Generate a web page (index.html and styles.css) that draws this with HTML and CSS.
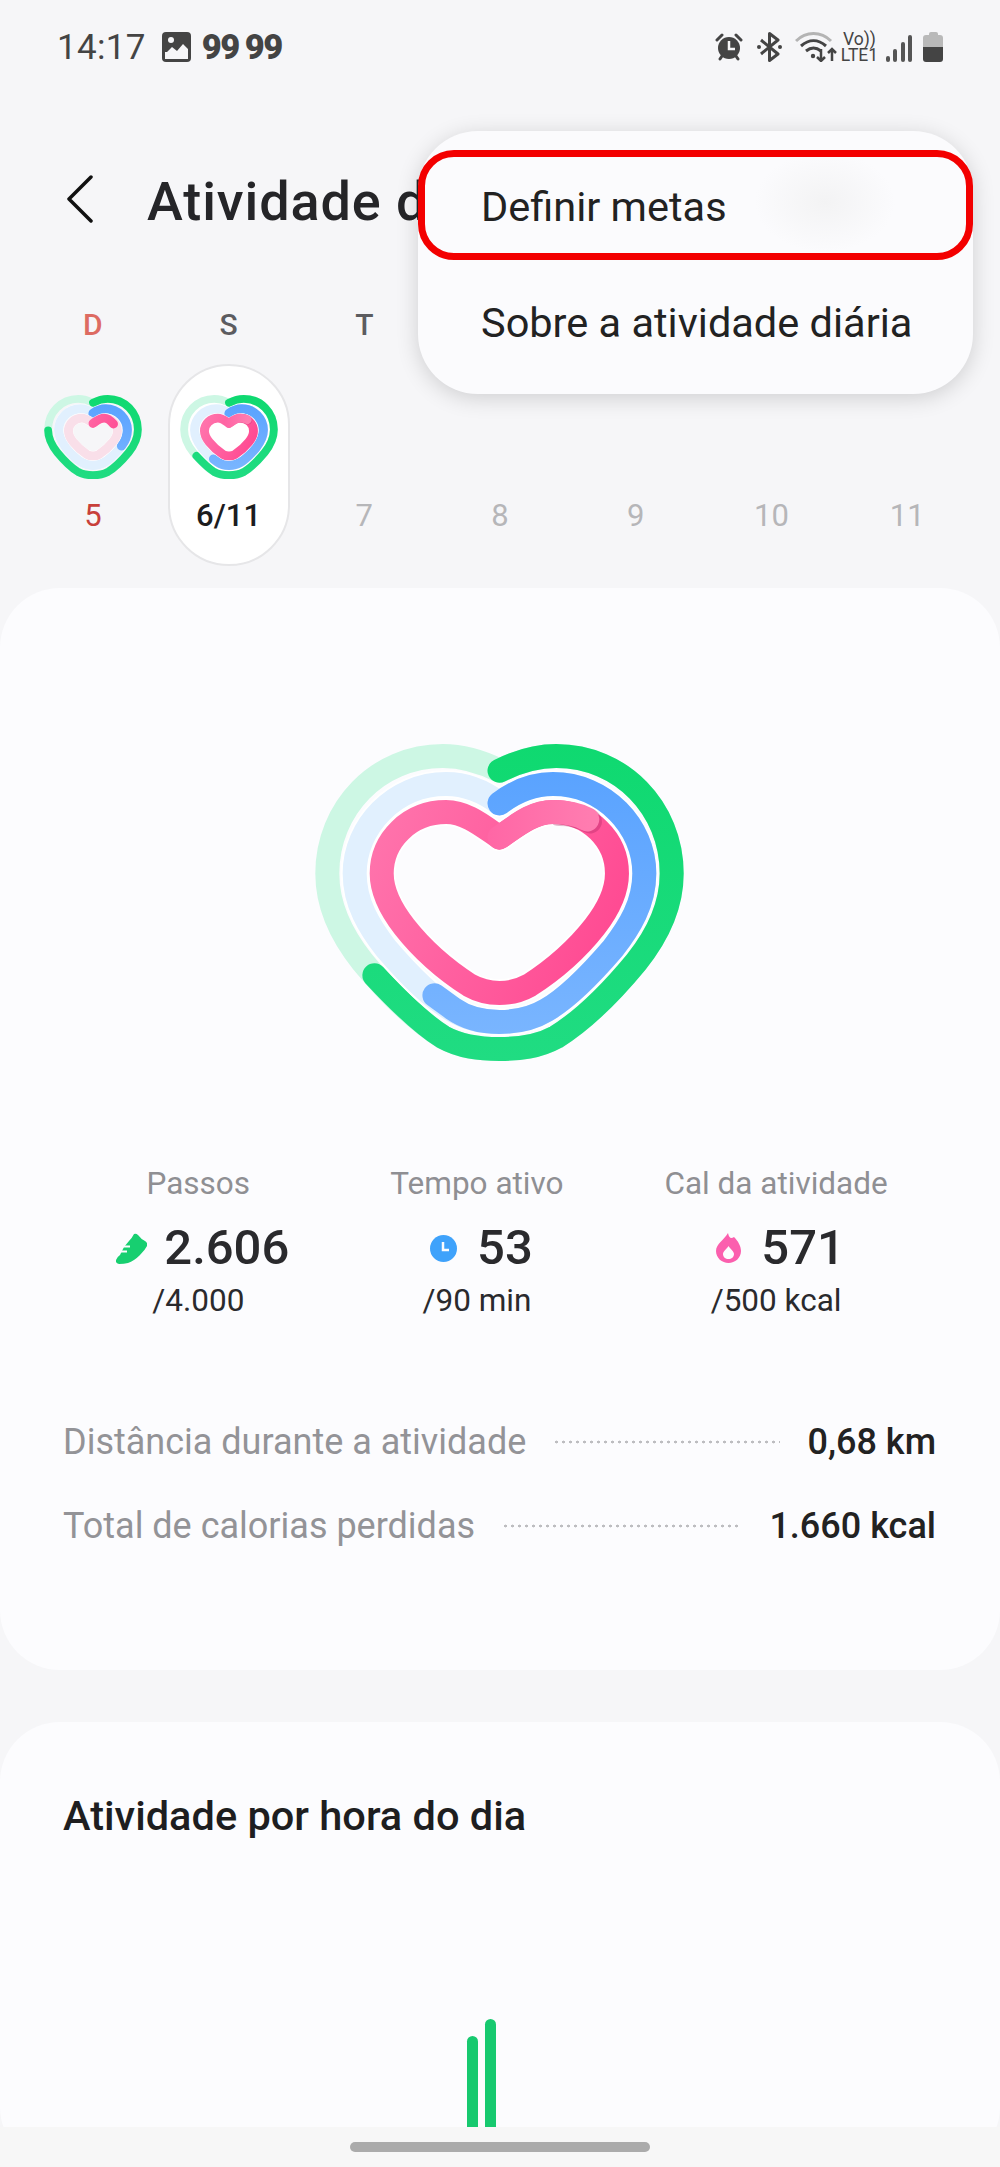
FILE: index.html
```html
<!DOCTYPE html>
<html lang="pt-BR">

<head>
    <meta charset="UTF-8">
    <meta name="viewport" content="width=device-width, initial-scale=1.0">
    <title>Atividade diária</title>
    <link rel="stylesheet" href="styles.css">
</head>

<body>
    <!-- rings shared by the big heart and the week strip -->
    <svg class="defs" width="0" height="0" aria-hidden="true">
        <defs>
            <linearGradient id="gradGreen" gradientUnits="userSpaceOnUse" x1="0" y1="72" x2="0" y2="1022">
                <stop offset="0" stop-color="#0fd970" />
                <stop offset="1" stop-color="#20dc82" />
            </linearGradient>
            <linearGradient id="gradBlue" gradientUnits="userSpaceOnUse" x1="0" y1="156" x2="0" y2="940">
                <stop offset="0" stop-color="#5aa3ff" />
                <stop offset="1" stop-color="#79b5ff" />
            </linearGradient>
            <linearGradient id="gradPink" gradientUnits="userSpaceOnUse" x1="300" y1="300" x2="1000" y2="600">
                <stop offset="0" stop-color="#ff72ab" />
                <stop offset="1" stop-color="#ff4a92" />
            </linearGradient>
            <linearGradient id="gradPinkTop" gradientUnits="userSpaceOnUse" x1="590" y1="0" x2="900" y2="0">
                <stop offset="0" stop-color="#ff66a5" />
                <stop offset="1" stop-color="#ff7cb0" />
            </linearGradient>
            <path id="outerHeart" d="M630 152C570 122 515 108 460 108C265 108 114 265 114 460C114 560 160 650 220 725C290 810 380 900 460 950C515 980 570 986 630 986C690 986 745 980 800 950C880 900 970 810 1040 725C1100 650 1146 560 1146 460C1146 265 995 108 800 108C745 108 690 122 630 152Z" />
            <path id="middleHeart" d="M630 250C580 212 530 192 470 192C315 192 196 320 196 460C196 550 240 620 290 685C350 755 420 830 490 870C535 897 580 905 630 905C680 905 725 897 770 870C840 830 910 755 970 685C1020 620 1064 550 1064 460C1064 320 945 192 790 192C730 192 680 212 630 250Z" />
            <path id="innerHeart" d="M630 352C580 318 530 276 470 276C360 276 277 360 277 460C277 520 310 575 345 620C400 690 470 750 540 795C570 812 600 818 630 818C660 818 690 812 720 795C790 750 860 690 915 620C950 575 982 520 982 460C982 360 900 276 790 276C730 276 680 318 630 352Z" />

            <symbol id="heartFull" class="heart-symbol" viewBox="78 72 1104 950">
                <g class="ring-outer">
                    <use href="#outerHeart" class="ring-green-pale" />
                    <path class="ring-green" d="M630 152C690 122 745 108 800 108C995 108 1146 265 1146 460C1146 560 1100 650 1040 725C970 810 880 900 800 950C745 980 690 986 630 986C570 986 515 980 460 950C400 912 320 835 255 765" />
                </g>
                <g class="ring-middle">
                    <use href="#middleHeart" class="ring-gap" />
                    <use href="#middleHeart" class="ring-blue-pale" />
                    <path class="ring-blue" d="M630 250C680 212 730 192 790 192C945 192 1064 320 1064 460C1064 550 1020 620 970 685C910 755 840 830 770 870C725 897 680 905 630 905C580 905 535 897 490 865L435 825" />
                </g>
                <g class="ring-inner">
                    <use href="#innerHeart" class="ring-gap" />
                    <use href="#innerHeart" class="ring-pink" />
                    <path class="ring-pink-shade" d="M800 276C830 276 865 283 893 298" />
                    <path class="ring-pink-top" d="M630 352C680 318 725 276 790 276C830 276 865 283 893 298" />
                </g>
            </symbol>

            <symbol id="heartPartial" class="heart-symbol" viewBox="78 72 1104 950">
                <g class="ring-outer">
                    <use href="#outerHeart" class="ring-green-pale" />
                    <path class="ring-green" d="M630 152C690 122 745 108 800 108C995 108 1146 265 1146 460C1146 560 1100 650 1040 725C970 810 880 900 800 950C745 980 690 986 630 986C570 986 515 980 460 950C380 900 290 810 220 725C160 650 114 560 114 470" />
                </g>
                <g class="ring-middle">
                    <use href="#middleHeart" class="ring-gap" />
                    <use href="#middleHeart" class="ring-blue-pale" />
                    <path class="ring-blue" d="M630 250C680 212 730 192 790 192C945 192 1064 320 1064 460C1064 550 1030 610 990 660" />
                </g>
                <g class="ring-inner">
                    <use href="#innerHeart" class="ring-gap" />
                    <use href="#innerHeart" class="ring-pink-pale" />
                    <path class="ring-pink" d="M630 352C680 318 725 276 790 276C840 276 890 320 925 360" />
                </g>
            </symbol>
        </defs>
    </svg>

    <div class="status-bar">
        <div class="status-left">
            <span class="clock">14:17</span>
            <svg class="status-image" width="29" height="30" viewBox="0 0 29 30">
                <rect x="0" y="0" width="29" height="30" rx="4" fill="#444" />
                <rect x="3" y="20" width="23" height="7" fill="#f6f6f8" />
                <path d="M3 22L10 15L15 19L21 12L26 17V27H3Z" fill="#f6f6f8" />
                <circle cx="9" cy="8" r="3" fill="#f6f6f8" />
            </svg>
            <span class="badge-count">99</span>
            <span class="badge-count">99</span>
        </div>
        <div class="status-right">
            <svg width="28" height="30" viewBox="0 0 28 30">
                <circle cx="14" cy="16" r="11" fill="#444" />
                <path d="M14 9V17H20" fill="none" stroke="#f6f6f8" stroke-width="2.5" />
                <path d="M2 8L7 3M26 8L21 3M5 27L7 24M23 27L21 24" stroke="#444" stroke-width="3" stroke-linecap="round" />
            </svg>
            <svg class="status-bt" width="25" height="30" viewBox="0 0 25 30">
                <path d="M4 8L21 22L12.500 28.500V1.500L21 8L4 22" fill="none" stroke="#444" stroke-width="3" stroke-linejoin="round" />
                <circle cx="2" cy="15" r="2" fill="#444" />
                <circle cx="23" cy="15" r="2" fill="#444" />
            </svg>
            <svg class="status-wifi" width="43" height="30" viewBox="0 0 43 30">
                <path d="M1 9C11 -1 26 -1 36 9" fill="none" stroke="#b4b4b4" stroke-width="3" />
                <path d="M6 14C14 7 23 7 31 14M11 19C16 15 21 15 26 19" fill="none" stroke="#444" stroke-width="3" />
                <circle cx="18" cy="24" r="2.200" fill="#444" />
                <path d="M26 17V29M22 25L26 29L30 25M37 29V17M33 21L37 17L41 21" fill="none" stroke="#444" stroke-width="2.500" />
            </svg>
            <span class="volte"><span>Vo))</span><span>LTE1</span></span>
            <div class="signal">
                <span class="signal-bar" style="height: 6px"></span>
                <span class="signal-bar" style="height: 13px"></span>
                <span class="signal-bar" style="height: 20px"></span>
                <span class="signal-bar" style="height: 27px"></span>
            </div>
            <div class="battery">
                <span class="battery-cap"></span>
                <span class="battery-body"></span>
            </div>
        </div>
    </div>

    <header class="app-header">
        <svg class="back-icon" width="26" height="48" viewBox="0 0 26 48">
            <path d="M24 2L2 24L24 46" fill="none" stroke="#111" stroke-width="3.500" stroke-linecap="round" stroke-linejoin="round" />
        </svg>
        <h1 class="page-title">Atividade d</h1>
    </header>

    <div class="menu">
        <div class="menu-item menu-item-marked">Definir metas</div>
        <div class="menu-item">Sobre a atividade diária</div>
    </div>

    <div class="week-letters">
        <span class="day-letter sunday">D</span>
        <span class="day-letter">S</span>
        <span class="day-letter">T</span>
    </div>

    <div class="week-days">
        <div class="day">
            <svg class="day-heart"><use href="#heartPartial" /></svg>
            <span class="day-number sunday-number">5</span>
        </div>
        <div class="day day-selected">
            <svg class="day-heart"><use href="#heartFull" /></svg>
            <span class="day-number">6/11</span>
        </div>
        <div class="day"><span class="day-number future">7</span></div>
        <div class="day"><span class="day-number future">8</span></div>
        <div class="day"><span class="day-number future">9</span></div>
        <div class="day"><span class="day-number future">10</span></div>
        <div class="day"><span class="day-number future">11</span></div>
    </div>

    <section class="card card-summary">
        <svg class="main-heart"><use href="#heartFull" /></svg>

        <div class="stats">
            <div class="stat stat-steps">
                <span class="stat-label">Passos</span>
                <div class="stat-value">
                    <svg width="31" height="31" viewBox="0 0 31 31">
                        <path d="M18 1Q20 0 22 2Q25 6 29 8Q32 10 31 13Q29 17 24 22Q18 28 12 30Q8 31 3 31Q-1 30 0 27Q1 24 4 22L8 14L13 8Q16 5 18 1Z" fill="#17cf70" />
                        <path d="M4 13.500H14M1 18.500H11" stroke="#fcfcfe" stroke-width="2" />
                    </svg>
                    <span>2.606</span>
                </div>
                <span class="stat-goal">/4.000</span>
            </div>
            <div class="stat">
                <span class="stat-label">Tempo ativo</span>
                <div class="stat-value">
                    <svg width="27" height="27" viewBox="0 0 27 27">
                        <circle cx="13.500" cy="13.500" r="13.500" fill="#3fa2fb" />
                        <path d="M13 7V15H19" fill="none" stroke="#fcfcfe" stroke-width="2.500" />
                    </svg>
                    <span>53</span>
                </div>
                <span class="stat-goal">/90 min</span>
            </div>
            <div class="stat">
                <span class="stat-label">Cal da atividade</span>
                <div class="stat-value">
                    <svg width="25" height="30" viewBox="0 0 25 30">
                        <path d="M12 0C13 5 15 6 18 4C22 8 25 13 25 18C25 25 19 30 12.500 30C6 30 0 25 0 18C0 11 8 7 12 0Z" fill="#fb5fae" />
                        <path d="M12.500 13C14 16 18 18 18 21C18 24 15.500 26 12.500 26C9.500 26 7 24 7 21C7 18 11 16 12.500 13Z" fill="#fcfcfe" />
                    </svg>
                    <span>571</span>
                </div>
                <span class="stat-goal">/500 kcal</span>
            </div>
        </div>

        <div class="totals">
            <div class="total-row">
                <span class="total-label">Distância durante a atividade</span>
                <span class="total-dots"></span>
                <span class="total-value">0,68 km</span>
            </div>
            <div class="total-row">
                <span class="total-label">Total de calorias perdidas</span>
                <span class="total-dots"></span>
                <span class="total-value">1.660 kcal</span>
            </div>
        </div>
    </section>

    <section class="card card-hourly">
        <h2 class="card-title">Atividade por hora do dia</h2>
        <div class="hour-chart">
            <span class="hour-bar" style="height: 91px"></span>
            <span class="hour-bar" style="height: 108px"></span>
        </div>
    </section>

    <div class="nav-bar"><span class="home-pill"></span></div>
</body>

</html>
```

FILE: styles.css
```css
* {
    box-sizing: border-box;
}

html,
body {
    margin: 0;
    height: 100%;
}

body {
    position: relative;
    height: 2167px;
    overflow: hidden;
    font-family: Roboto, "Noto Sans", sans-serif;
    background-color: #f6f6f8;
    color: #252528;
}

.defs {
    position: absolute;
}

/* rings, the small hearts use thicker strokes and a tighter middle */
.heart-symbol {
    overflow: visible;
}

.ring-outer,
.ring-middle,
.ring-inner {
    fill: none;
    stroke-linecap: round;
    stroke-linejoin: round;
}

.ring-outer {
    stroke-width: var(--outer-ring, 72);
}

.ring-middle {
    stroke-width: var(--middle-ring, 72);
    transform: translate(630px, 547px) scale(var(--middle-scale, 1)) translate(-630px, -547px);
}

.ring-inner {
    stroke-width: var(--inner-ring, 72);
    transform: translate(630px, 547px) scale(var(--inner-scale, 1)) translate(-630px, -547px);
}

.ring-green-pale {
    stroke: #cdf7e4;
}

.ring-green {
    stroke: url(#gradGreen);
}

.ring-middle .ring-gap {
    stroke: #fff;
    stroke-width: var(--middle-gap, 83);
}

.ring-inner .ring-gap {
    stroke: #fff;
    stroke-width: var(--inner-gap, 83);
}

.ring-blue-pale {
    stroke: #e1f0fe;
}

.ring-blue {
    stroke: url(#gradBlue);
}

.ring-pink-pale {
    stroke: #f9dfe9;
}

.ring-pink {
    stroke: url(#gradPink);
}

.ring-pink-shade {
    stroke: rgba(160, 30, 90, 0.3);
    transform: translate(8px, 6px);
}

.ring-pink-top {
    stroke: url(#gradPinkTop);
}

/* status bar */
.status-bar {
    display: flex;
    justify-content: space-between;
    align-items: center;
    height: 94px;
    padding: 0 57px;
    color: #444;
}

.status-left,
.status-right {
    display: flex;
    align-items: center;
}

.clock {
    font-size: 35px;
    letter-spacing: 0.3px;
    margin-right: 16px;
}

.status-image {
    margin-right: 11px;
}

.badge-count {
    font-size: 34.500px;
    font-weight: 900;
    letter-spacing: -1.5px;
    margin-right: 6px;
}

.status-bt {
    margin-left: 14px;
}

.status-wifi {
    margin-left: 13px;
}

.volte {
    display: flex;
    flex-direction: column;
    align-items: center;
    width: 35px;
    margin-left: 4px;
    font-size: 17.500px;
    line-height: 16px;
}

.signal {
    display: flex;
    align-items: flex-end;
    gap: 3.500px;
    height: 29px;
    margin-left: 8.500px;
}

.signal-bar {
    width: 4px;
    background-color: #555;
    border-radius: 2px;
}

.battery {
    display: flex;
    flex-direction: column;
    align-items: center;
    margin-left: 11px;
}

.battery-cap {
    width: 9px;
    height: 3px;
    background-color: #b9b9b9;
    border-radius: 2px 2px 0 0;
}

.battery-body {
    width: 20px;
    height: 27px;
    border-radius: 3px;
    background: linear-gradient(#b9b9b9 46%, #444 46%);
}

/* header */
.app-header {
    display: flex;
    align-items: center;
    gap: 54px;
    height: 210px;
    padding-left: 67px;
}

.page-title {
    margin: 4px 0 0;
    font-size: 54px;
    font-weight: 500;
    letter-spacing: 0.9px;
    white-space: nowrap;
}

/* overflow menu */
.menu {
    position: absolute;
    top: 131px;
    left: 418px;
    width: 555px;
    height: 263px;
    padding-top: 19px;
    background-color: #fbfbfd;
    border-radius: 60px;
    box-shadow: 0 4px 22px rgba(0, 0, 0, 0.16);
    z-index: 2;
}

.menu-item {
    display: flex;
    align-items: center;
    height: 124px;
    padding-left: 63px;
    font-size: 41.500px;
    color: #222;
}

.menu-item-marked {
    height: 110px;
    padding-top: 2px;
    border: 7px solid #f30000;
    border-radius: 36px;
    padding-left: 56px;
    background: radial-gradient(ellipse 70px 50px at 400px 45px, #f3f3f4, transparent);
}

/* week strip */
.week-letters,
.week-days {
    display: grid;
    grid-template-columns: repeat(7, 1fr);
    padding: 0 25px;
}

.week-letters {
    height: 40px;
    margin-bottom: 20px;
}

.day-letter {
    padding-top: 1px;
    text-align: center;
    font-size: 30px;
    font-weight: 500;
    line-height: 40px;
    color: #5c5c60;
}

.sunday {
    color: #dd6b62;
}

.week-days {
    height: 202px;
    margin-bottom: 22px;
}

.day {
    display: flex;
    flex-direction: column;
    align-items: center;
    justify-content: flex-end;
    padding-bottom: 30px;
}

.day-selected {
    width: 122px;
    justify-self: center;
    background-color: #fff;
    border: 2px solid #e6e6e8;
    border-radius: 61px;
    padding-bottom: 28px;
}

.day-heart {
    --outer-ring: 90;
    --middle-scale: 0.91;
    --middle-ring: 116;
    --middle-gap: 124;
    --inner-scale: 0.8;
    --inner-ring: 128;
    --inner-gap: 138;
    width: 96px;
    height: 84px;
    margin-bottom: 17px;
    overflow: visible;
}

.day-number {
    font-size: 31px;
    line-height: 40px;
}

.day-selected .day-number {
    font-weight: 500;
    color: #1c1c1e;
}

.sunday-number {
    color: #c8403a;
}

.future {
    color: #b6b6b9;
}

/* cards */
.card {
    background-color: #fcfcfe;
    border-radius: 60px;
}

.card-summary {
    display: flex;
    flex-direction: column;
    align-items: center;
    height: 1082px;
    padding: 156px 64px 0 63px;
}

.main-heart {
    width: 369px;
    height: 317px;
    flex-shrink: 0;
}

.stats {
    display: flex;
    justify-content: center;
    gap: 101px;
    margin-top: 103px;
    padding-right: 4px;
}

.stat {
    display: flex;
    flex-direction: column;
    align-items: center;
}

.stat-label {
    font-size: 31.500px;
    line-height: 40px;
    color: #8f8f93;
    white-space: nowrap;
}

.stat-value {
    display: flex;
    align-items: center;
    gap: 20px;
    margin-top: 16px;
    padding-left: 9px;
    font-size: 49px;
    font-weight: 500;
    line-height: 56px;
    color: #2a2a2d;
}

.stat-steps .stat-value {
    gap: 17px;
}

.stat-goal {
    margin-top: 7px;
    font-size: 31.500px;
    line-height: 36px;
    color: #2a2a2d;
}

.totals {
    display: flex;
    flex-direction: column;
    gap: 40px;
    width: 100%;
    margin-top: 101px;
}

.total-row {
    display: flex;
    align-items: center;
    height: 44px;
    gap: 27px;
}

.total-label {
    font-size: 36px;
    color: #939397;
    white-space: nowrap;
}

.total-dots {
    flex: 1;
    height: 4px;
    background: radial-gradient(circle, #bdbdc0 1.200px, transparent 1.700px) 0 0 / 7px 4px repeat-x;
}

.total-value {
    font-size: 36px;
    font-weight: 500;
    color: #222;
    white-space: nowrap;
}

.card-hourly {
    height: 445px;
    margin-top: 52px;
    padding: 70px 0 0 63px;
}

.card-title {
    margin: 0;
    font-size: 41.500px;
    font-weight: 500;
    line-height: 48px;
    color: #1e1e20;
}

.hour-chart {
    display: flex;
    align-items: flex-end;
    gap: 7px;
    height: 287px;
    padding-left: 404px;
}

.hour-bar {
    width: 11px;
    background-color: #17c96f;
    border-radius: 6px 6px 0 0;
}

/* gesture bar */
.nav-bar {
    position: absolute;
    left: 0;
    right: 0;
    bottom: 0;
    display: flex;
    justify-content: center;
    height: 40px;
    padding-top: 15px;
    background-color: #f7f7f7;
}

.home-pill {
    width: 300px;
    height: 10px;
    background-color: #ababab;
    border-radius: 5px;
}
```
